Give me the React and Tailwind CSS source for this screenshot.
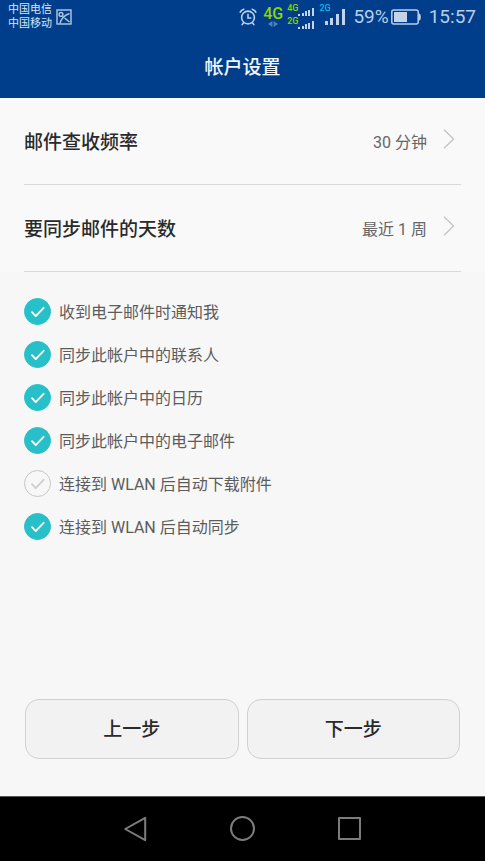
import React, { useState } from 'react';

const OPTIONS = [
  { id: 'notify', label: '收到电子邮件时通知我', checked: true },
  { id: 'contacts', label: '同步此帐户中的联系人', checked: true },
  { id: 'calendar', label: '同步此帐户中的日历', checked: true },
  { id: 'email', label: '同步此帐户中的电子邮件', checked: true },
  { id: 'wlan-download', label: '连接到 WLAN 后自动下载附件', checked: false },
  { id: 'wlan-sync', label: '连接到 WLAN 后自动同步', checked: true },
];

function SmallBars() {
  return (
    <svg className="mt-1" width="16" height="9" viewBox="0 0 16 9" fill="#c3d3ea">
      <rect x="0" y="6" width="2" height="2" />
      <rect x="4" y="5" width="2" height="3" />
      <rect x="7" y="3" width="2" height="5" />
      <rect x="10" y="2" width="2" height="6" />
      <rect x="14" y="0" width="2" height="8" />
    </svg>
  );
}

function StatusBar() {
  return (
    <div className="flex h-[34px] items-center pl-2 pr-[9px] text-[#bccde6]">
      <div className="text-[11px] leading-[14px] text-[#dbe5f3]">
        <p>中国电信</p>
        <p>中国移动</p>
      </div>
      <svg className="ml-1" width="16" height="16" viewBox="0 0 16 16" fill="none" stroke="#b4c7e2" strokeWidth="1.4">
        <rect x="1" y="1" width="14" height="14" />
        <circle cx="5" cy="5.4" r="1.9" />
        <path d="M4 14.5C5 10 8 6.5 13.5 4.5M8.5 9l5 4" />
      </svg>

      <div className="ml-auto flex items-center">
        {/* alarm */}
        <svg width="18" height="18" viewBox="0 0 18 18" fill="none" stroke="currentColor" strokeWidth="1.6" strokeLinecap="round">
          <circle cx="9" cy="9.5" r="6.4" />
          <path d="M9 6.4v3.6h2.8M1.2 4.2Q2.2 2 4.8 1.2M13.2 1.2Q15.8 2 16.8 4.2M4.5 15l-1.3 1.6M13.5 15l1.3 1.6" />
        </svg>

        <div className="ml-1.5 flex flex-col items-center">
          <span className="text-base leading-[14px] font-medium text-[#8fd400]">4G</span>
          <svg width="10" height="6" viewBox="0 0 10 6" fill="#4f7fbe">
            <path d="M4.4 0v6L0 3zM5.6 0v6L10 3z" />
          </svg>
        </div>

        <div className="ml-1 text-[9px] leading-2 font-medium text-[#8fd400]">
          <div className="flex items-start"><span>4G</span><SmallBars /></div>
          <div className="flex items-start"><span>2G</span><SmallBars /></div>
        </div>

        <div className="relative ml-[11px]">
          <span className="absolute -left-1.5 -top-1.5 text-[9px] leading-3 font-medium text-[#12b5e8]">2G</span>
          <svg width="20" height="18" viewBox="0 0 20 18" fill="#c3d3ea">
            <rect x="0" y="13" width="3" height="4" />
            <rect x="5" y="10" width="3" height="7" />
            <rect x="11" y="6" width="3" height="11" />
            <rect x="17" y="1" width="3" height="16" />
          </svg>
        </div>

        <span className="ml-2 text-[19px] leading-6">59%</span>
        <svg className="ml-0.5" width="30" height="16" viewBox="0 0 30 16">
          <rect x="0.8" y="1" width="26.4" height="14" rx="2" fill="none" stroke="#bccde6" strokeWidth="1.5" />
          <rect x="3" y="3" width="13" height="10" fill="#c3d3ea" />
          <path d="M28 4.5q1.8 0 1.8 3.5t-1.8 3.5z" fill="#bccde6" />
        </svg>
        <span className="ml-2 text-[19px] leading-6">15:57</span>
      </div>
    </div>
  );
}

function SettingRow({ label, value }) {
  return (
    <button type="button" className="flex h-[87px] w-full items-center border-b border-[#d9d9d9] pt-1 text-left">
      <span className="text-[19px] font-medium text-[#2a2a2a]">{label}</span>
      <span className="ml-auto text-base text-[#666]">{value}</span>
      <svg className="mb-2 ml-4 mr-1.5" width="12" height="20" viewBox="0 0 12 20" fill="none" stroke="#c4c4c4" strokeWidth="1.3">
        <path d="M1 0.8L10.6 10L1 19.2" />
      </svg>
    </button>
  );
}

function Option({ id, label, checked, onChange }) {
  return (
    <label htmlFor={id} className="flex h-[43px] items-center gap-2 text-base text-[#5c5c5c]">
      <span className="grid shrink-0">
        <input
          id={id}
          type="checkbox"
          checked={checked}
          onChange={onChange}
          className="peer col-start-1 row-start-1 size-[27px] appearance-none rounded-full border border-[#c6c6c6] checked:border-[#28c0c8] checked:bg-[#28c0c8]"
        />
        <svg
          className="pointer-events-none col-start-1 row-start-1 size-[27px] text-[#cfcfcf] peer-checked:text-white"
          viewBox="0 0 27 27"
          fill="none"
          stroke="currentColor"
          strokeWidth="1.9"
          strokeLinecap="round"
          strokeLinejoin="round"
        >
          <path d="M8 14.2l3.7 3.9L19.6 9.8" />
        </svg>
      </span>
      <span className="pt-0.5">{label}</span>
    </label>
  );
}

function NavBar() {
  return (
    <nav className="flex h-[65px] items-center justify-center gap-[81px] border-t border-[#555] bg-black text-[#7c7c7c]">
      <button type="button" aria-label="返回">
        <svg width="26" height="26" viewBox="0 0 26 26" fill="none" stroke="currentColor" strokeWidth="2" strokeLinejoin="round">
          <path d="M22.2 1.8v22.4L2.2 13z" />
        </svg>
      </button>
      <button type="button" aria-label="主页">
        <svg width="26" height="26" viewBox="0 0 26 26" fill="none" stroke="currentColor" strokeWidth="2">
          <circle cx="12.5" cy="12.5" r="11.5" />
        </svg>
      </button>
      <button type="button" aria-label="最近任务">
        <svg width="26" height="26" viewBox="0 0 26 26" fill="none" stroke="currentColor" strokeWidth="2" strokeLinejoin="round">
          <rect x="2" y="2" width="21" height="21" />
        </svg>
      </button>
    </nav>
  );
}

export default function App() {
  const [options, setOptions] = useState(OPTIONS);

  const toggle = (id) => {
    setOptions(options.map((o) => (o.id === id ? { ...o, checked: !o.checked } : o)));
  };

  return (
    <div className="flex min-h-screen flex-col bg-[#f7f7f7] font-[Roboto,'Noto_Sans_CJK_SC',sans-serif]">
      <header className="bg-[#003e8c]">
        <StatusBar />
        <h1 className="pb-4 pt-5 text-center text-[19px] leading-7 font-medium text-[#f2f6fb]">帐户设置</h1>
      </header>

      <main className="flex flex-1 flex-col">
        <section className="bg-[#f9f9f9] px-6">
          <SettingRow label="邮件查收频率" value="30 分钟" />
          <SettingRow label="要同步邮件的天数" value="最近 1 周" />
        </section>

        <section className="mt-[18px] px-6">
          {options.map((o) => (
            <Option key={o.id} {...o} onChange={() => toggle(o.id)} />
          ))}
        </section>

        <div className="mt-auto flex gap-2 px-[25px] pb-[37px]">
          <button type="button" className="h-[60px] flex-1 rounded-[14px] border border-[#d0d0d0] bg-[#f2f2f2] pt-0.5 text-[19px] font-medium text-[#2a2a2a]">
            上一步
          </button>
          <button type="button" className="h-[60px] flex-1 rounded-[14px] border border-[#d0d0d0] bg-[#f2f2f2] pt-0.5 text-[19px] font-medium text-[#2a2a2a]">
            下一步
          </button>
        </div>
      </main>

      <NavBar />
    </div>
  );
}
